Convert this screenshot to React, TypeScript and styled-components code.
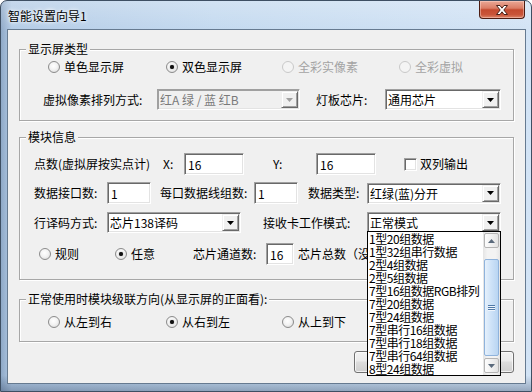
import React from "react";
import styled, { createGlobalStyle } from "styled-components";

const Global = createGlobalStyle`
  html, body { margin: 0; padding: 0; background: #fff; }
  body { font-family: "Noto Sans CJK SC", "Liberation Sans", sans-serif; font-size: 12px; color: #000; }
  * { box-sizing: border-box; }
`;

const Window = styled.div`
  position: relative;
  width: 532px;
  height: 392px;
  border: 1px solid #3e4f63;
  border-radius: 7px 7px 0 0;
  background:
    linear-gradient(180deg, rgba(255,255,255,0.25) 0%, rgba(255,255,255,0) 8%, rgba(0,0,0,0) 96%, rgba(40,60,90,0.35) 100%),
    linear-gradient(90deg, #8fa9c7 0%, #b3cbe6 2%, #c3d9ef 40%, #d2e3f5 100%);
  display: flex;
  flex-direction: column;
  overflow: hidden;
`;

const TitleBar = styled.div`
  height: 28px;
  display: flex;
  align-items: flex-start;
  flex: none;
`;

const Title = styled.div`
  margin: 6px 0 0 7px;
  line-height: 17px;
  font-size: 12px;
  color: #000;
  text-shadow: 0 0 5px #fff, 0 0 3px rgba(255,255,255,0.9);
`;

const CloseButton = styled.div`
  margin-left: auto;
  margin-right: 6px;
  width: 46px;
  height: 18px;
  border: 1px solid #4d1c12;
  border-top: none;
  border-radius: 0 0 4px 4px;
  background: linear-gradient(180deg, #eaa896 0%, #db7d66 42%, #c44a2f 52%, #c9553a 80%, #dc8468 100%);
  box-shadow: inset 0 0 0 1px rgba(255, 220, 210, 0.45);
  display: flex;
  align-items: center;
  justify-content: center;
`;

const Client = styled.div`
  margin: 0 5px 0 6px;
  height: 355px;
  border: 1px solid #667a90;
  background: #f0f0f0;
  display: flex;
  flex-direction: column;
  flex: none;
`;

const Group = styled.fieldset<{ $mt: number; $h: number }>`
  margin: ${(p) => p.$mt}px 0 0 11px;
  padding: 0;
  width: 495px;
  height: ${(p) => p.$h}px;
  min-inline-size: 0;
  border: 1px solid #a7a7a7;
  box-shadow: inset 1px 1px 0 #fff, 1px 1px 0 #fff;
  flex: none;
`;

const Legend = styled.legend`
  margin-left: 6px;
  padding: 0 2px;
  height: 16px;
  line-height: 16px;
  background: #f0f0f0;
  white-space: nowrap;
`;

const Row = styled.div<{ $mt: number; $h: number; $pl: number }>`
  display: flex;
  align-items: center;
  margin-top: ${(p) => p.$mt}px;
  height: ${(p) => p.$h}px;
  padding-left: ${(p) => p.$pl}px;
`;

const Cell = styled.div<{ $w?: number }>`
  flex: none;
  width: ${(p) => (p.$w ? `${p.$w}px` : "auto")};
  display: flex;
  align-items: center;
  white-space: nowrap;
`;

const Label = styled.span<{ $dis?: boolean }>`
  line-height: 16px;
  color: ${(p) => (p.$dis ? "#a3a3a3" : "#000")};
  white-space: nowrap;
`;

const Edit = styled.input<{ $w: number }>`
  width: ${(p) => p.$w}px;
  height: 22px;
  margin: 0;
  padding: 0 0 0 3px;
  font: inherit;
  color: #000;
  background: #fff;
  border: 1px solid;
  border-color: #a0a0a0 #fff #fff #a0a0a0;
  box-shadow: inset 1px 1px 0 #696969, inset -1px -1px 0 #e3e3e3;
  outline: none;
`;

const Combo = styled.div<{ $w: number; $dis?: boolean }>`
  width: ${(p) => p.$w}px;
  height: 21px;
  display: flex;
  align-items: stretch;
  border: 1px solid;
  border-color: #a0a0a0 #fff #fff #a0a0a0;
  box-shadow: inset 1px 1px 0 ${(p) => (p.$dis ? "#a0a0a0" : "#696969")}, inset -1px -1px 0 #e3e3e3;
  background: ${(p) => (p.$dis ? "#f0f0f0" : "#fff")};
  color: ${(p) => (p.$dis ? "#7a7a7a" : "#000")};
`;

const ComboText = styled.span`
  flex: 1;
  padding-left: 2px;
  line-height: 19px;
  white-space: nowrap;
  overflow: hidden;
`;

const DropBtn = styled.div`
  width: 17px;
  margin: 1px 1px 1px 0;
  background: #f0f0f0;
  border: 1px solid;
  border-color: #f0f0f0 #696969 #696969 #f0f0f0;
  box-shadow: inset 1px 1px 0 #fff, inset -1px -1px 0 #a0a0a0;
  display: flex;
  align-items: center;
  justify-content: center;
`;

const RadioDot = styled.span<{ $on?: boolean; $dis?: boolean }>`
  flex: none;
  width: 12px;
  height: 12px;
  margin-right: 4px;
  border-radius: 50%;
  border: 1px solid ${(p) => (p.$dis ? "#c9c9c9" : "#8b8b8b")};
  background: ${(p) =>
    p.$dis
      ? "#f4f4f4"
      : "radial-gradient(circle at 45% 40%, #ffffff 0%, #f3f3f3 45%, #d4d4d4 100%)"};
  display: flex;
  align-items: center;
  justify-content: center;
  &::after {
    content: "";
    display: ${(p) => (p.$on ? "block" : "none")};
    width: 4px;
    height: 4px;
    border-radius: 50%;
    background: #111;
    box-shadow: 0 0 1px #333;
  }
`;

const CheckBox = styled.span`
  flex: none;
  width: 13px;
  height: 13px;
  margin-right: 3px;
  background: #fff;
  border: 1px solid;
  border-color: #a0a0a0 #fff #fff #a0a0a0;
  box-shadow: inset 1px 1px 0 #696969, inset -1px -1px 0 #e3e3e3;
`;

const ButtonRow = styled.div`
  display: flex;
  justify-content: flex-end;
  gap: 10px;
  margin-top: 9px;
  padding-right: 11px;
`;

const Button = styled.div`
  width: 75px;
  height: 22px;
  border: 1px solid #707070;
  border-radius: 3px;
  background: linear-gradient(180deg, #f2f2f2 0%, #ebebeb 45%, #dddddd 50%, #cfcfcf 100%);
  box-shadow: inset 0 0 0 1px rgba(255,255,255,0.7);
`;

const DropList = styled.div`
  position: absolute;
  left: 366px;
  top: 230px;
  width: 134px;
  height: 145px;
  border: 1px solid #000;
  background: #fff;
  display: flex;
`;

const Items = styled.div`
  flex: 1;
  overflow: hidden;
  letter-spacing: -0.45px;
`;

const Item = styled.div`
  height: 13px;
  line-height: 13px;
  padding-left: 1px;
  white-space: nowrap;
`;

const ScrollBar = styled.div`
  width: 17px;
  flex: none;
  display: flex;
  flex-direction: column;
  align-items: center;
  padding: 1px 0 2px;
  background: linear-gradient(90deg, #e4e4e4 0%, #f3f3f3 25%, #f3f3f3 75%, #e6e6e6 100%);
`;

const ScrollBtn = styled.div`
  width: 15px;
  height: 15px;
  flex: none;
  border: 1px solid #b4b4b4;
  border-radius: 2px;
  background: linear-gradient(90deg, #fdfdfd 0%, #eeeeee 60%, #e2e2e2 100%);
  display: flex;
  align-items: center;
  justify-content: center;
`;

const Thumb = styled.div`
  width: 15px;
  height: 97px;
  margin-top: 11px;
  flex: none;
  border: 1px solid #8fb3dc;
  border-radius: 2px;
  background: linear-gradient(90deg, #e6f1fc 0%, #cfe3f8 45%, #b9d5f2 100%);
  display: flex;
  flex-direction: column;
  align-items: center;
  justify-content: center;
  gap: 1px;
`;

const Grip = styled.span`
  width: 7px;
  height: 1px;
  background: #4f79a8;
  box-shadow: 0 1px 0 #eef5fd;
`;

const Spacer = styled.div`
  flex: 1;
`;

const Arrow = ({ up, color = "#000" }: { up?: boolean; color?: string }) => (
  <svg width="7" height="4" viewBox="0 0 7 4">
    <path d={up ? "M0 4h7L3.5 0z" : "M0 0h7L3.5 4z"} fill={color} />
  </svg>
);

const CloseGlyph = () => (
  <svg width="14" height="12" viewBox="0 0 14 12">
    <path
      d="M1.5 1.5H5L7 4.2L9 1.5H12.5L8.8 6L12.5 10.5H9L7 7.8L5 10.5H1.5L5.2 6Z"
      fill="#fff"
      stroke="#4a2118"
      strokeWidth="1"
      strokeLinejoin="round"
    />
  </svg>
);

const Radio = ({ on, dis, children }: { on?: boolean; dis?: boolean; children: React.ReactNode }) => (
  <>
    <RadioDot $on={on} $dis={dis} />
    <Label $dis={dis}>{children}</Label>
  </>
);

const ComboBox = ({ w, text, dis }: { w: number; text: string; dis?: boolean }) => (
  <Combo $w={w} $dis={dis}>
    <ComboText>{text}</ComboText>
    <DropBtn>
      <Arrow color={dis ? "#a0a0a0" : "#000"} />
    </DropBtn>
  </Combo>
);

const listItems = [
  "1型20组数据",
  "1型32组串行数据",
  "2型4组数据",
  "2型5组数据",
  "7型16组数据RGB排列",
  "7型20组数据",
  "7型24组数据",
  "7型串行16组数据",
  "7型串行18组数据",
  "7型串行64组数据",
  "8型24组数据",
];

export default function App() {
  return (
    <>
      <Global />
      <Window>
        <TitleBar>
          <Title>智能设置向导1</Title>
          <CloseButton>
            <CloseGlyph />
          </CloseButton>
        </TitleBar>
        <Client>
          <Group $mt={11} $h={80}>
            <Legend>显示屏类型</Legend>
            <Row $mt={1} $h={18} $pl={28}>
              <Cell $w={118}>
                <Radio>单色显示屏</Radio>
              </Cell>
              <Cell $w={116}>
                <Radio on>双色显示屏</Radio>
              </Cell>
              <Cell $w={117}>
                <Radio dis>全彩实像素</Radio>
              </Cell>
              <Cell>
                <Radio dis>全彩虚拟</Radio>
              </Cell>
            </Row>
            <Row $mt={13} $h={21} $pl={23}>
              <Cell $w={114}>
                <Label>虚拟像素排列方式:</Label>
              </Cell>
              <Cell $w={159}>
                <ComboBox w={143} text="红A 绿 / 蓝 红B" dis />
              </Cell>
              <Cell $w={69}>
                <Label>灯板芯片:</Label>
              </Cell>
              <Cell>
                <ComboBox w={116} text="通用芯片" />
              </Cell>
            </Row>
          </Group>

          <Group $mt={8} $h={151}>
            <Legend>模块信息</Legend>
            <Row $mt={8} $h={22} $pl={14}>
              <Cell $w={129}>
                <Label>点数(虚拟屏按实点计)</Label>
              </Cell>
              <Cell $w={21}>
                <Label>X:</Label>
              </Cell>
              <Cell $w={89}>
                <Edit $w={60} defaultValue="16" readOnly />
              </Cell>
              <Cell $w={43}>
                <Label>Y:</Label>
              </Cell>
              <Cell $w={88}>
                <Edit $w={60} defaultValue="16" readOnly />
              </Cell>
              <Cell>
                <CheckBox />
                <Label>双列输出</Label>
              </Cell>
            </Row>
            <Row $mt={7} $h={22} $pl={14}>
              <Cell $w={73}>
                <Label>数据接口数:</Label>
              </Cell>
              <Cell $w={53}>
                <Edit $w={44} defaultValue="1" readOnly />
              </Cell>
              <Cell $w={94}>
                <Label>每口数据线组数:</Label>
              </Cell>
              <Cell $w={54}>
                <Edit $w={44} defaultValue="1" readOnly />
              </Cell>
              <Cell $w={59}>
                <Label>数据类型:</Label>
              </Cell>
              <Cell>
                <ComboBox w={134} text="红绿(蓝)分开" />
              </Cell>
            </Row>
            <Row $mt={8} $h={21} $pl={14}>
              <Cell $w={73}>
                <Label>行译码方式:</Label>
              </Cell>
              <Cell $w={156}>
                <ComboBox w={134} text="芯片138译码" />
              </Cell>
              <Cell $w={104}>
                <Label>接收卡工作模式:</Label>
              </Cell>
              <Cell>
                <ComboBox w={134} text="正常模式" />
              </Cell>
            </Row>
            <Row $mt={10} $h={22} $pl={19}>
              <Cell $w={76}>
                <Radio>规则</Radio>
              </Cell>
              <Cell $w={78}>
                <Radio on>任意</Radio>
              </Cell>
              <Cell $w={73}>
                <Label>芯片通道数:</Label>
              </Cell>
              <Cell $w={32}>
                <Edit $w={28} defaultValue="16" readOnly />
              </Cell>
              <Cell>
                <Label>芯片总数（没有使用）:</Label>
              </Cell>
            </Row>
          </Group>

          <Group $mt={11} $h={51}>
            <Legend>正常使用时模块级联方向(从显示屏的正面看):</Legend>
            <Row $mt={6} $h={18} $pl={28}>
              <Cell $w={118}>
                <Radio>从左到右</Radio>
              </Cell>
              <Cell $w={116}>
                <Radio on>从右到左</Radio>
              </Cell>
              <Cell>
                <Radio>从上到下</Radio>
              </Cell>
            </Row>
          </Group>

          <ButtonRow>
            <Button />
            <Button />
          </ButtonRow>
        </Client>

        <DropList>
          <Items>
            {listItems.map((t) => (
              <Item key={t}>{t}</Item>
            ))}
          </Items>
          <ScrollBar>
            <ScrollBtn>
              <Arrow up color="#5a6a7c" />
            </ScrollBtn>
            <Thumb>
              <Grip />
              <Grip />
              <Grip />
            </Thumb>
            <Spacer />
            <ScrollBtn>
              <Arrow color="#5a6a7c" />
            </ScrollBtn>
          </ScrollBar>
        </DropList>
      </Window>
    </>
  );
}
